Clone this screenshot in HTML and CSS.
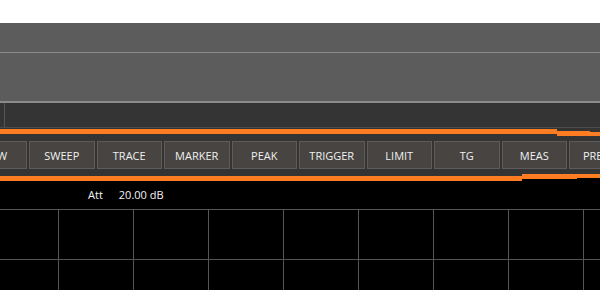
FILE: index.html
```html
<!DOCTYPE html>
<html>
<head>
<meta charset="utf-8">
<link rel="stylesheet" href="styles.css">
</head>
<body>
<div class="screen">
  <div class="blank"></div>
  <div class="panel-a"></div>
  <div class="panel-b"></div>
  <div class="input-bar"><div class="input-stub"></div></div>
  <div class="gap-dark"></div>
  <div class="orange-top">
    <div class="seg seg-a"></div>
    <div class="seg seg-b"></div>
    <div class="seg seg-c"></div>
  </div>
  <div class="menu">
    <div class="btn">VIEW</div>
    <div class="btn">SWEEP</div>
    <div class="btn">TRACE</div>
    <div class="btn">MARKER</div>
    <div class="btn">PEAK</div>
    <div class="btn">TRIGGER</div>
    <div class="btn">LIMIT</div>
    <div class="btn">TG</div>
    <div class="btn">MEAS</div>
    <div class="btn">PRESET</div>
  </div>
  <div class="orange-bottom">
    <div class="bseg bseg-a"></div>
    <div class="bseg bseg-b"></div>
    <div class="bseg bseg-c"></div>
  </div>
  <div class="info">
    <span class="label">Att</span>
    <span class="value">20.00 dB</span>
  </div>
  <div class="grid"></div>
</div>
</body>
</html>
```
FILE: styles.css
```css
html, body {
  margin: 0;
  padding: 0;
  background: #ffffff;
}
.screen {
  width: 600px;
  height: 290px;
  overflow: hidden;
  background: #000;
  font-family: "Open Sans", "Liberation Sans", sans-serif;
  font-size: 11px;
  color: #f2f2f2;
}
.blank {
  height: 23px;
  background: #ffffff;
}
.panel-a {
  height: 29px;
  background: #5c5c5c;
  border-bottom: 1px solid #8c8c8c;
}
.panel-b {
  height: 48px;
  background: #5c5c5c;
  border-bottom: 2px solid #8a8a8a;
}
.input-bar {
  height: 24px;
  background: #343434;
  border-bottom: 1px solid #4c4c4c;
  display: flex;
}
.input-stub {
  width: 4px;
  border-right: 1px solid #555555;
}
.gap-dark {
  height: 1px;
  background: #343434;
}
.orange-top {
  height: 8px;
  background: #343434;
  display: flex;
  align-items: flex-start;
}
.seg {
  height: 5px;
  background: #ff7d22;
}
.seg-a { width: 557px; }
.seg-b { width: 33px; margin-top: 2px; }
.seg-c { flex: 1; margin-top: 3px; height: 4px; }
.menu {
  height: 28px;
  padding: 4px 0 5px;
  background: #343434;
  display: flex;
  gap: 2px;
  margin-left: -38.5px;
}
.btn {
  flex: 0 0 65.5px;
  box-sizing: border-box;
  height: 28px;
  background: #474442;
  border: 1px solid #5e5b59;
  display: flex;
  align-items: center;
  justify-content: center;
  white-space: nowrap;
  color: #f0f0f0;
}
.orange-bottom {
  height: 7px;
  background: #000;
  display: flex;
  align-items: flex-start;
}
.bseg {
  height: 5px;
  background: #ff7d22;
}
.bseg-a {
  width: 522px;
  border-top: 2px solid #343434;
}
.bseg-b { width: 55px; }
.bseg-c { flex: 1; height: 4px; }
.info {
  height: 28px;
  line-height: 28px;
  display: flex;
  gap: 16px;
  padding-left: 88px;
  color: #f4f4f4;
}
.grid {
  height: 100px;
  margin-left: -17px;
  width: 700px;
  background-image:
    linear-gradient(to right, #555555 1px, transparent 1px),
    linear-gradient(to bottom, #555555 1px, transparent 1px);
  background-size: 75px 50px;
}
```
